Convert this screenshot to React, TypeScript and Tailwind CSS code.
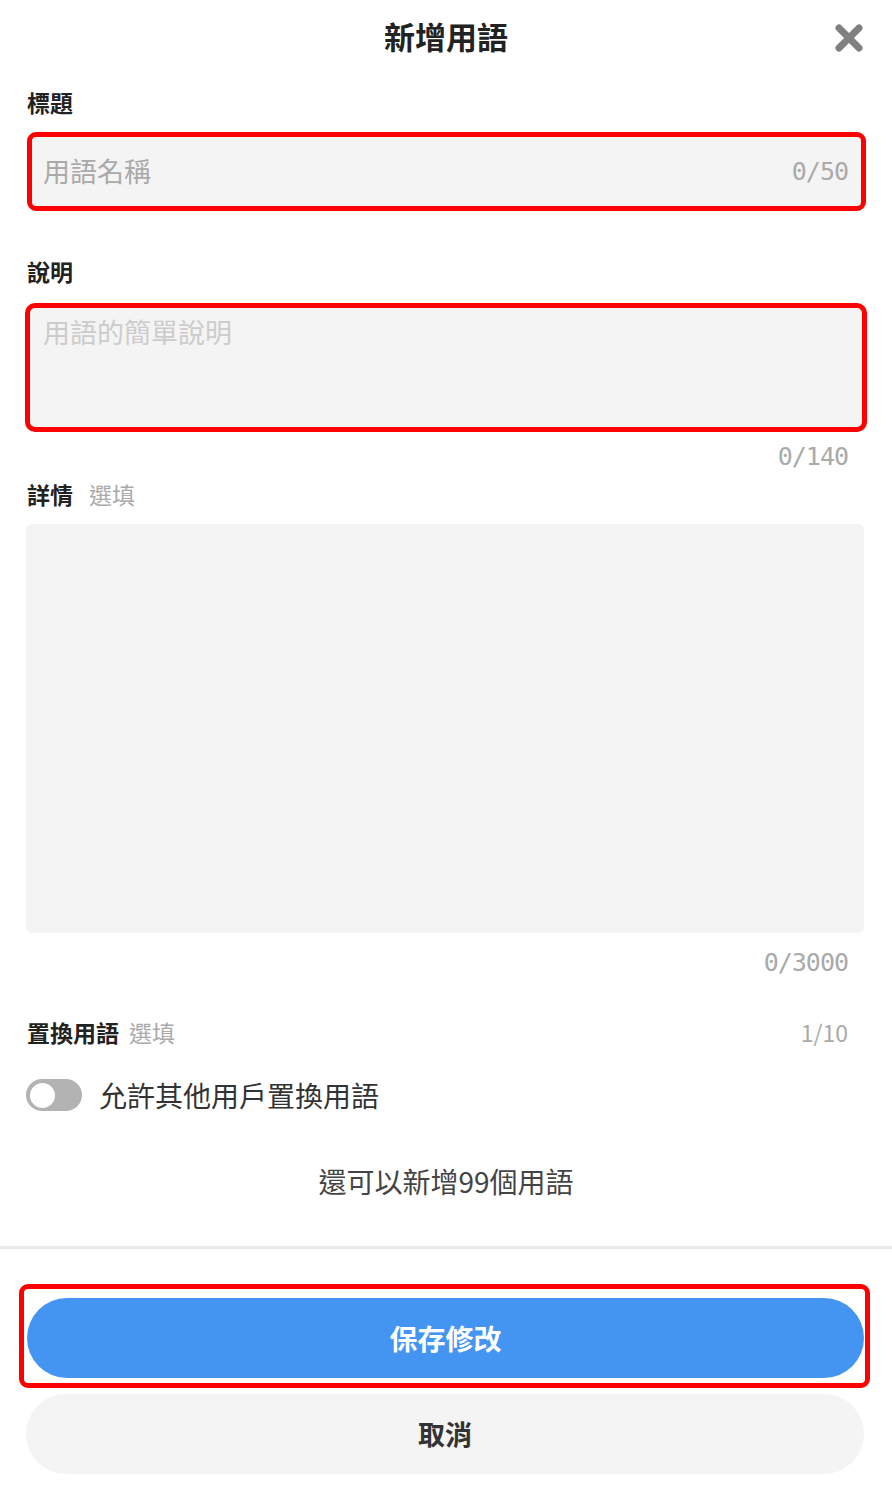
const cjk = "font-['Noto_Sans_CJK_TC','Noto_Sans_CJK_SC',sans-serif]";
const mono = "font-['DejaVu_Sans_Mono',monospace] text-[25px] tracking-[-1px] text-[#aaaaaa]";

function CloseIcon() {
  return (
    <svg width="32" height="32" viewBox="0 0 32 32" className="absolute right-[27px] top-[22px]">
      <path d="M6 6 L26 26 M26 6 L6 26" stroke="#808080" strokeWidth="7" strokeLinecap="round" fill="none" />
    </svg>
  );
}

function Label({ text, optional, gap = "gap-[16px]" }: { text: string; optional?: boolean; gap?: string }) {
  return (
    <div className={`flex h-[30px] items-center px-[27px] ${gap}`}>
      <span className="text-[23px] font-bold text-[#222]">{text}</span>
      {optional && <span className="text-[23px] text-[#aaaaaa]">選填</span>}
    </div>
  );
}

function Counter({ text }: { text: string }) {
  return (
    <div className={`flex h-[30px] items-center justify-end pr-[44px] ${mono}`}>{text}</div>
  );
}

export default function App() {
  return (
    <div className={`min-h-[1500px] w-[892px] bg-white ${cjk}`}>
      <header className="relative flex h-[76px] items-center justify-center">
        <h1 className="mb-[4px] text-[31px] font-bold text-[#222]">新增用語</h1>
        <CloseIcon />
      </header>

      <div className="pt-[11px]">
        <Label text="標題" />
      </div>
      <div className="ml-[27px] mr-[26px] mt-[15px] flex h-[79px] items-center justify-between rounded-[9px] border-[5px] border-[#ff0000] bg-[#f4f4f4] pl-[11px] pr-[13px]">
        <span className="text-[27px] text-[#aaaaaa]">用語名稱</span>
        <span className={mono}>0/50</span>
      </div>

      <div className="mt-[45px]">
        <Label text="說明" />
      </div>
      <div className="mx-[25px] mt-[17px] h-[129px] rounded-[10px] border-[5px] border-[#ff0000] bg-[#f4f4f4] pl-[13px] pt-[6px]">
        <span className="text-[27px] leading-[36px] text-[#cccccc]">用語的簡單說明</span>
      </div>
      <div className="mt-[10px]">
        <Counter text="0/140" />
      </div>

      <div className="mt-[7px]">
        <Label text="詳情" optional />
      </div>
      <div className="ml-[26px] mr-[28px] mt-[15px] h-[409px] rounded-md bg-[#f4f4f4]" />
      <div className="mt-[15px]">
        <Counter text="0/3000" />
      </div>

      <div className="mt-[39px] flex h-[30px] items-center justify-between pr-[44px]">
        <Label text="置換用語" optional gap="gap-[10px]" />
        <span className="text-[23px] leading-none text-[#aaaaaa]">1/10</span>
      </div>

      <div className="mt-[30px] flex h-[36px] items-center gap-[17px] px-[26px]">
        <div className="flex h-[32px] w-[56px] items-center rounded-full bg-[#b3b3b3] pl-[4px]">
          <div className="h-[25px] w-[25px] rounded-full bg-white" />
        </div>
        <span className="text-[28px] text-[#333]">允許其他用戶置換用語</span>
      </div>

      <div className="mt-[50px] flex h-[36px] items-center justify-center">
        <span className="text-[28px] text-[#444]">還可以新增99個用語</span>
      </div>

      <div className="mt-[47px] h-[3px] bg-[#e9e9e9]" />

      <div className="ml-[19px] mt-[35px] w-[851px] rounded-[9px] border-[5px] border-[#ff0000] pb-[5px] pl-[3px] pr-[1px] pt-[9px]">
        <button className="flex h-[80px] w-full items-center justify-center rounded-full bg-[#4495f1] text-[28px] font-bold text-white">
          保存修改
        </button>
      </div>
      <div className="ml-[26px] mr-[28px] mt-[6px]">
        <button className="flex h-[80px] w-full items-center justify-center rounded-full bg-[#f4f4f4] text-[27px] font-bold text-[#333]">
          取消
        </button>
      </div>
    </div>
  );
}
